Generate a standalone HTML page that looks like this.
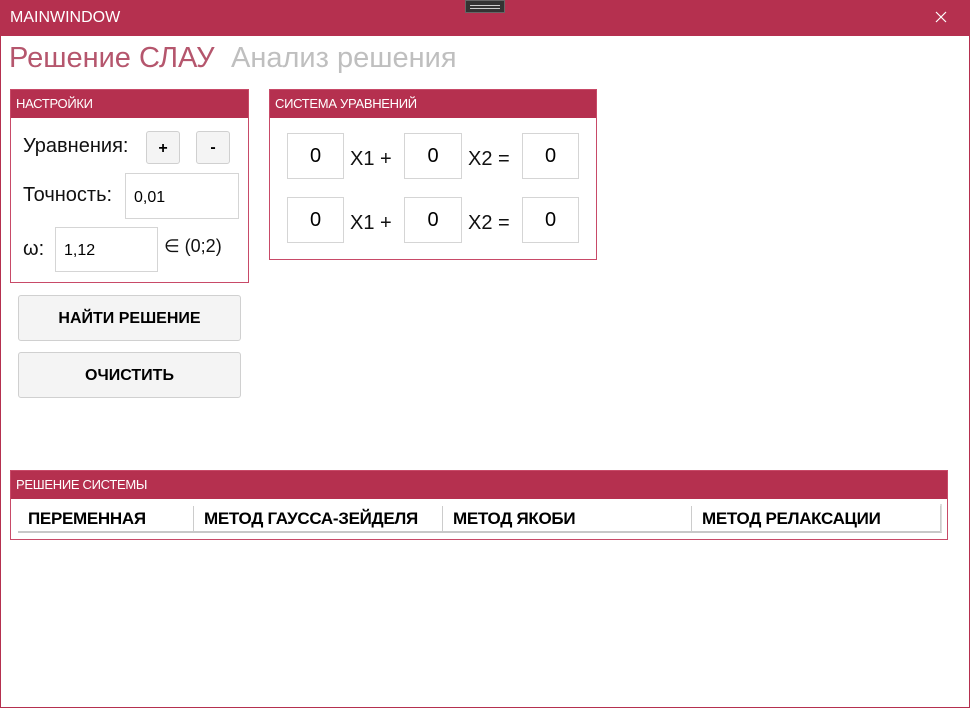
<!DOCTYPE html>
<html><head><meta charset="utf-8"><style>
*{margin:0;padding:0;box-sizing:border-box}
body{width:970px;height:708px;position:relative;background:#fff;font-family:"Liberation Sans",sans-serif;overflow:hidden}
.a{position:absolute}
.win{left:0;top:0;width:970px;height:708px;border:1px solid #b5304f}
.tb{left:0;top:0;width:970px;height:36px;background:#b5304f;color:#fff}
.box{border:1px solid #c84a68;background:#fff}
.hd{background:#b5304f;color:#fff;font-size:13px;line-height:28px;padding-left:5px;letter-spacing:-0.3px}
.in{border:1px solid #d5d5d5;background:#fff;font-size:20px;text-align:center}
.lbl{font-size:20px;color:#111}
.btn{background:#f4f4f4;border:1px solid #d0d0d0;border-radius:3px;font-weight:bold;text-align:center}
.col{top:506px;height:25px;font-size:17px;font-weight:bold;line-height:25px;padding-left:10px;border-right:1px solid #ccc;letter-spacing:-0.3px}
</style></head><body>
<div class="a win"></div>
<div class="a tb"><div class="a" style="left:10px;top:9px;font-size:16px">MAINWINDOW</div>
<div class="a" style="left:465px;top:0;width:40px;height:13px;background:#333;border:1px solid #666"></div>
<div class="a" style="left:470px;top:5px;width:30px;height:1px;background:#ccc"></div>
<div class="a" style="left:470px;top:8px;width:30px;height:1px;background:#ccc"></div>
<svg class="a" style="left:935px;top:11px" width="12" height="12"><path d="M1 1L11 11M11 1L1 11" stroke="#fff" stroke-width="1.2"/></svg></div>
<div class="a" style="left:9px;top:42px;font-size:29px;color:#b5566d">Решение СЛАУ</div>
<div class="a" style="left:231px;top:42px;font-size:29px;color:#bfbfbf">Анализ решения</div>

<div class="a box" style="left:10px;top:89px;width:239px;height:194px"><div class="hd">НАСТРОЙКИ</div></div>
<div class="a lbl" style="left:23px;top:135px">Уравнения:</div>
<div class="a btn" style="left:146px;top:131px;width:34px;height:33px;line-height:33px;font-size:16px">+</div>
<div class="a btn" style="left:196px;top:131px;width:34px;height:33px;line-height:31px;font-size:16px">-</div>
<div class="a lbl" style="left:23px;top:184px">Точность:</div>
<div class="a in" style="left:125px;top:173px;width:114px;height:46px;font-size:16px;text-align:left;padding:15px 8px">0,01</div>
<div class="a in" style="left:55px;top:227px;width:103px;height:45px;font-size:16px;text-align:left;padding:14px 8px">1,12</div>
<div class="a lbl" style="left:23px;top:238px">ω:</div>
<div class="a lbl" style="left:164px;top:236px;font-size:18px">∈ (0;2)</div>
<div class="a btn" style="left:18px;top:295px;width:223px;height:46px;line-height:46px;font-size:16px">НАЙТИ РЕШЕНИЕ</div>
<div class="a btn" style="left:18px;top:352px;width:223px;height:46px;line-height:46px;font-size:16px">ОЧИСТИТЬ</div>

<div class="a box" style="left:269px;top:89px;width:328px;height:171px"><div class="hd">СИСТЕМА УРАВНЕНИЙ</div></div>
<div class="a in" style="left:287px;top:133px;width:57px;height:46px;line-height:44px">0</div>
<div class="a lbl" style="left:350px;top:148px">X1 +</div>
<div class="a in" style="left:404px;top:133px;width:58px;height:46px;line-height:44px">0</div>
<div class="a lbl" style="left:468px;top:148px">X2 =</div>
<div class="a in" style="left:522px;top:133px;width:57px;height:46px;line-height:44px">0</div>
<div class="a in" style="left:287px;top:197px;width:57px;height:46px;line-height:44px">0</div>
<div class="a lbl" style="left:350px;top:212px">X1 +</div>
<div class="a in" style="left:404px;top:197px;width:58px;height:46px;line-height:44px">0</div>
<div class="a lbl" style="left:468px;top:212px">X2 =</div>
<div class="a in" style="left:522px;top:197px;width:57px;height:46px;line-height:44px">0</div>

<div class="a box" style="left:10px;top:470px;width:938px;height:70px"><div class="hd">РЕШЕНИЕ СИСТЕМЫ</div></div>
<div class="a" style="left:18px;top:504px;width:924px;height:29px;border-bottom:2px solid #c8c8c8;border-right:2px solid #ddd"></div>
<div class="a col" style="left:18px;width:176px">ПЕРЕМЕННАЯ</div>
<div class="a col" style="left:194px;width:249px">МЕТОД ГАУССА-ЗЕЙДЕЛЯ</div>
<div class="a col" style="left:443px;width:249px">МЕТОД ЯКОБИ</div>
<div class="a col" style="left:692px;width:249px">МЕТОД РЕЛАКСАЦИИ</div>
</body></html>
